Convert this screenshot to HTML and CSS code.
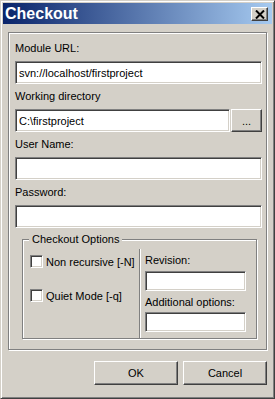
FILE: index.html
```html
<!DOCTYPE html>
<html lang="en">
<head>
    <meta charset="UTF-8">
    <title>Checkout</title>
    <link rel="stylesheet" href="styles.css">
</head>
<body>
    <div class="window">
        <div class="titlebar">
            <span class="title">Checkout</span>
            <span class="close">
                <svg width="10" height="9" viewBox="0 0 10 9"><path d="M1 0.5L9 8.5M9 0.5L1 8.5" stroke="#000" stroke-width="2" fill="none"/></svg>
            </span>
        </div>
        <div class="panel">
            <label class="label">Module URL:</label>
            <input class="edit" type="text" value="svn://localhost/firstproject">
            <label class="label">Working directory</label>
            <div class="row">
                <input class="edit" type="text" value="C:\firstproject">
                <button class="browse">...</button>
            </div>
            <label class="label">User Name:</label>
            <input class="edit" type="text">
            <label class="label">Password:</label>
            <input class="edit" type="password">
            <div class="group">
                <span class="legend">Checkout Options</span>
                <div class="col-left">
                    <label class="check"><input type="checkbox"> Non recursive [-N]</label>
                    <label class="check second"><input type="checkbox"> Quiet Mode [-q]</label>
                </div>
                <div class="col-right">
                    <label class="label">Revision:</label>
                    <input class="small" type="text">
                    <label class="label gap">Additional options:</label>
                    <input class="small tight" type="text">
                </div>
            </div>
        </div>
        <div class="buttons">
            <button class="btn">OK</button>
            <button class="btn">Cancel</button>
        </div>
    </div>
</body>
</html>
```

FILE: styles.css
```css
body {
    margin: 0;
    font-family: "Liberation Sans", Arial, sans-serif;
    font-size: 11px;
    color: #000;
    background: #d4d0c8;
}
.window {
    box-sizing: border-box;
    width: 275px;
    height: 399px;
    background: #d4d0c8;
    border: 1px solid;
    border-color: #d4d0c8 #404040 #404040 #d4d0c8;
    box-shadow: inset 1px 1px #fff, inset -1px -1px #808080;
    padding: 2px;
    display: flex;
    flex-direction: column;
}
.titlebar {
    height: 21px;
    flex: none;
    display: flex;
    align-items: center;
    justify-content: space-between;
    padding: 0 4px 0 2px;
    background: linear-gradient(to right, #0a246a, #a6caf0);
    color: #fff;
}
.title {
    font-weight: bold;
    font-size: 16px;
    line-height: 21px;
}
.close {
    box-sizing: border-box;
    width: 17px;
    height: 14px;
    margin-top: 1px;
    background: #d4d0c8;
    border: 1px solid;
    border-color: #fff #404040 #404040 #fff;
    box-shadow: inset -1px -1px #808080;
    display: flex;
    align-items: center;
    justify-content: center;
}
.panel {
    margin: 8px 5px 0;
    border: 1px solid #808080;
    box-shadow: inset 1px 1px #fff, 1px 1px #fff;
    padding: 9px 4px 10px 6px;
}
.label {
    display: block;
    line-height: 13px;
}
.edit, .small {
    display: block;
    box-sizing: border-box;
    width: 100%;
    height: 23px;
    margin: 6px 0;
    padding: 0 3px;
    font-family: inherit;
    font-size: 11px;
    color: #000;
    background: #fff;
    border: 1px solid;
    border-color: #808080 #fff #fff #808080;
    box-shadow: inset 1px 1px #404040, inset -1px -1px #d4d0c8;
    outline: none;
}
.row {
    display: flex;
    gap: 1px;
    margin: 6px 0;
}
.row .edit {
    flex: 1;
    margin: 0;
}
.browse, .btn {
    box-sizing: border-box;
    padding: 0;
    font-family: inherit;
    font-size: 11px;
    color: #000;
    background: #d4d0c8;
    border: 1px solid;
    border-color: #fff #404040 #404040 #fff;
    box-shadow: inset -1px -1px #808080;
}
.browse {
    width: 31px;
    height: 23px;
}
.group {
    position: relative;
    display: flex;
    margin: 11px 5px 0 7px;
    padding-top: 9px;
    border: 1px solid #808080;
    box-shadow: inset 1px 1px #fff, 1px 1px #fff;
}
.legend {
    position: absolute;
    top: -7px;
    left: 6px;
    padding: 0 3px;
    line-height: 13px;
    background: #d4d0c8;
}
.col-left {
    box-sizing: border-box;
    width: 116px;
    padding: 6px 0 0 7px;
}
.check {
    display: flex;
    align-items: center;
    gap: 3px;
    height: 13px;
    white-space: nowrap;
}
.check.second {
    margin-top: 21px;
}
.check input {
    appearance: none;
    box-sizing: border-box;
    width: 13px;
    height: 13px;
    margin: 0;
    background: #fff;
    border: 1px solid;
    border-color: #808080 #fff #fff #808080;
    box-shadow: inset 1px 1px #404040, inset -1px -1px #d4d0c8;
}
.col-right {
    flex: 1;
    border-left: 1px solid #808080;
    box-shadow: inset 1px 0 #fff;
    padding: 5px 10px 6px 5px;
}
.small {
    height: 20px;
    margin: 4px 0 0;
}
.small.tight {
    margin-top: 3px;
}
.label.gap {
    margin-top: 5px;
}
.buttons {
    display: flex;
    justify-content: flex-end;
    gap: 5px;
    margin-top: 11px;
    padding-right: 5px;
}
.btn {
    width: 84px;
    height: 24px;
}
```
